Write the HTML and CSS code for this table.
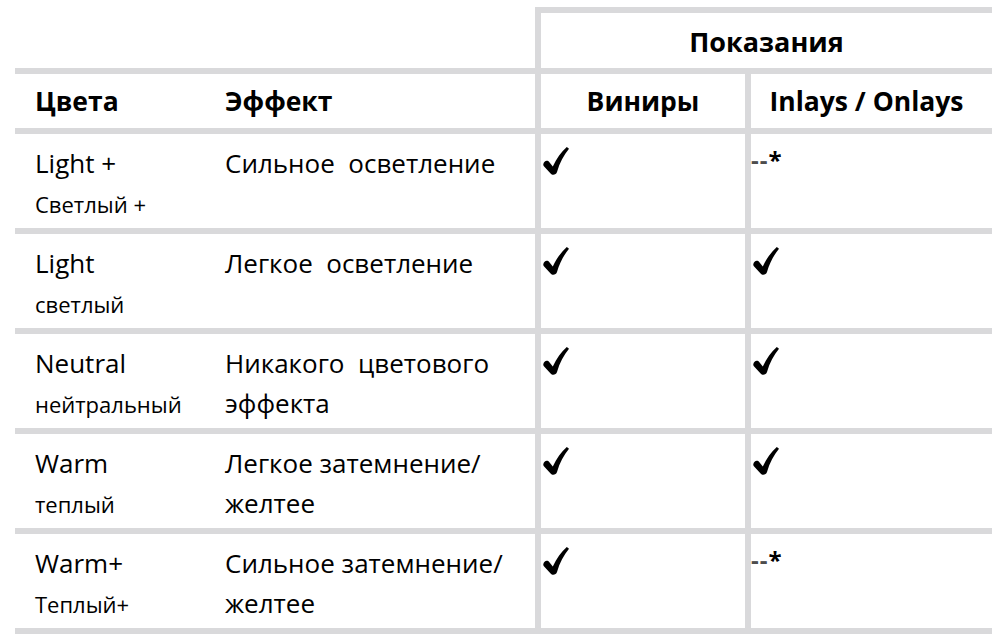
FILE: index.html
```html
<!DOCTYPE html>
<html lang="ru">
<head>
<meta charset="utf-8">
<title>Цвета</title>
<link rel="stylesheet" href="styles.css">
</head>
<body>
<table class="shades">
  <colgroup>
    <col class="c-color"><col class="c-effect"><col class="c-ven"><col class="c-inl">
  </colgroup>
  <thead>
    <tr class="top">
      <td class="blank" colspan="2"></td>
      <th class="group" colspan="2">Показания</th>
    </tr>
    <tr class="sub">
      <th class="h-left">Цвета</th>
      <th class="h-left">Эффект</th>
      <th class="v h-center">Виниры</th>
      <th class="v h-center h-inl">Inlays / Onlays</th>
    </tr>
  </thead>
  <tbody>
    <tr>
      <td class="name"><div class="en">Light +</div><div class="ru">Светлый +</div></td>
      <td class="eff">Сильное&nbsp; осветление</td>
      <td class="v mark"><svg class="check" viewBox="0 0 26 28"><path d="M0.3,17.2 C0.9,13.8 4.4,12.7 6.4,15.2 L9.8,19.6 C13.6,11.4 18.2,5 23.8,0 L26,1.8 C20.9,8 16.6,15.8 14,25 C13.2,27.9 9.3,28.8 7.6,26.5 L0.9,19.3 C0.4,18.7 0.2,17.9 0.3,17.2 Z"/></svg></td>
      <td class="v mark"><span class="na"><span class="dash">--</span>*</span></td>
    </tr>
    <tr>
      <td class="name"><div class="en">Light</div><div class="ru">светлый</div></td>
      <td class="eff">Легкое&nbsp; осветление</td>
      <td class="v mark"><svg class="check" viewBox="0 0 26 28"><path d="M0.3,17.2 C0.9,13.8 4.4,12.7 6.4,15.2 L9.8,19.6 C13.6,11.4 18.2,5 23.8,0 L26,1.8 C20.9,8 16.6,15.8 14,25 C13.2,27.9 9.3,28.8 7.6,26.5 L0.9,19.3 C0.4,18.7 0.2,17.9 0.3,17.2 Z"/></svg></td>
      <td class="v mark"><svg class="check" viewBox="0 0 26 28"><path d="M0.3,17.2 C0.9,13.8 4.4,12.7 6.4,15.2 L9.8,19.6 C13.6,11.4 18.2,5 23.8,0 L26,1.8 C20.9,8 16.6,15.8 14,25 C13.2,27.9 9.3,28.8 7.6,26.5 L0.9,19.3 C0.4,18.7 0.2,17.9 0.3,17.2 Z"/></svg></td>
    </tr>
    <tr>
      <td class="name"><div class="en">Neutral</div><div class="ru">нейтральный</div></td>
      <td class="eff">Никакого&nbsp; цветового<br>эффекта</td>
      <td class="v mark"><svg class="check" viewBox="0 0 26 28"><path d="M0.3,17.2 C0.9,13.8 4.4,12.7 6.4,15.2 L9.8,19.6 C13.6,11.4 18.2,5 23.8,0 L26,1.8 C20.9,8 16.6,15.8 14,25 C13.2,27.9 9.3,28.8 7.6,26.5 L0.9,19.3 C0.4,18.7 0.2,17.9 0.3,17.2 Z"/></svg></td>
      <td class="v mark"><svg class="check" viewBox="0 0 26 28"><path d="M0.3,17.2 C0.9,13.8 4.4,12.7 6.4,15.2 L9.8,19.6 C13.6,11.4 18.2,5 23.8,0 L26,1.8 C20.9,8 16.6,15.8 14,25 C13.2,27.9 9.3,28.8 7.6,26.5 L0.9,19.3 C0.4,18.7 0.2,17.9 0.3,17.2 Z"/></svg></td>
    </tr>
    <tr>
      <td class="name"><div class="en">Warm</div><div class="ru">теплый</div></td>
      <td class="eff">Легкое затемнение/<br>желтее</td>
      <td class="v mark"><svg class="check" viewBox="0 0 26 28"><path d="M0.3,17.2 C0.9,13.8 4.4,12.7 6.4,15.2 L9.8,19.6 C13.6,11.4 18.2,5 23.8,0 L26,1.8 C20.9,8 16.6,15.8 14,25 C13.2,27.9 9.3,28.8 7.6,26.5 L0.9,19.3 C0.4,18.7 0.2,17.9 0.3,17.2 Z"/></svg></td>
      <td class="v mark"><svg class="check" viewBox="0 0 26 28"><path d="M0.3,17.2 C0.9,13.8 4.4,12.7 6.4,15.2 L9.8,19.6 C13.6,11.4 18.2,5 23.8,0 L26,1.8 C20.9,8 16.6,15.8 14,25 C13.2,27.9 9.3,28.8 7.6,26.5 L0.9,19.3 C0.4,18.7 0.2,17.9 0.3,17.2 Z"/></svg></td>
    </tr>
    <tr>
      <td class="name"><div class="en">Warm+</div><div class="ru">Теплый+</div></td>
      <td class="eff">Сильное затемнение/<br>желтее</td>
      <td class="v mark"><svg class="check" viewBox="0 0 26 28"><path d="M0.3,17.2 C0.9,13.8 4.4,12.7 6.4,15.2 L9.8,19.6 C13.6,11.4 18.2,5 23.8,0 L26,1.8 C20.9,8 16.6,15.8 14,25 C13.2,27.9 9.3,28.8 7.6,26.5 L0.9,19.3 C0.4,18.7 0.2,17.9 0.3,17.2 Z"/></svg></td>
      <td class="v mark"><span class="na"><span class="dash">--</span>*</span></td>
    </tr>
  </tbody>
</table>
</body>
</html>
```
FILE: styles.css
```css
html, body {
  margin: 0;
  padding: 0;
  background: #ffffff;
}
body {
  font-family: "Open Sans", "Noto Sans", sans-serif;
  color: #000000;
}
.shades {
  border-collapse: separate;
  border-spacing: 0;
  table-layout: fixed;
  width: 977px;
  margin: 7px 0 0 15px;
}
.c-color { width: 190px; }
.c-effect { width: 330px; }
.c-ven { width: 210px; }
.c-inl { width: 247px; }

.shades td, .shades th {
  padding: 0;
  border-bottom: 6px solid #d9d9db;
  vertical-align: top;
  text-align: left;
  box-sizing: content-box;
}
.shades .v {
  border-left: 6px solid #d9d9db;
}
.top td, .top th {
  height: 55px;
}
.shades .group {
  border-top: 6px solid #d9d9db;
  border-left: 6px solid #d9d9db;
  text-align: center;
  font-weight: 700;
  font-size: 27px;
  line-height: 53px;
  height: 53px;
  padding-top: 2px;
}
.sub th {
  height: 54px;
  font-weight: 700;
  font-size: 26.5px;
  line-height: 54px;
}
.sub .h-left { padding-left: 20px; }
.sub .h-center { text-align: center; }
.sub .h-inl { padding-right: 10px; }

.shades tbody td {
  height: 85px;
  padding-top: 9px;
}
.shades .name,
.shades .eff {
  padding-left: 20px;
}
.eff {
  font-size: 26px;
  line-height: 40px;
}
.en {
  font-size: 26px;
  line-height: 40px;
}
.ru {
  font-size: 22px;
  line-height: 40px;
  margin-top: 1px;
}
.check {
  display: block;
  width: 26px;
  height: 28px;
  margin: 4px 0 0 2px;
  fill: #000;
}
.na {
  display: block;
  font-size: 24px;
  line-height: 24px;
  margin-top: 5px;
  font-weight: 700;
}
.dash {
  color: #4d4d4d;
  font-weight: 700;
  letter-spacing: 1px;
}
```
